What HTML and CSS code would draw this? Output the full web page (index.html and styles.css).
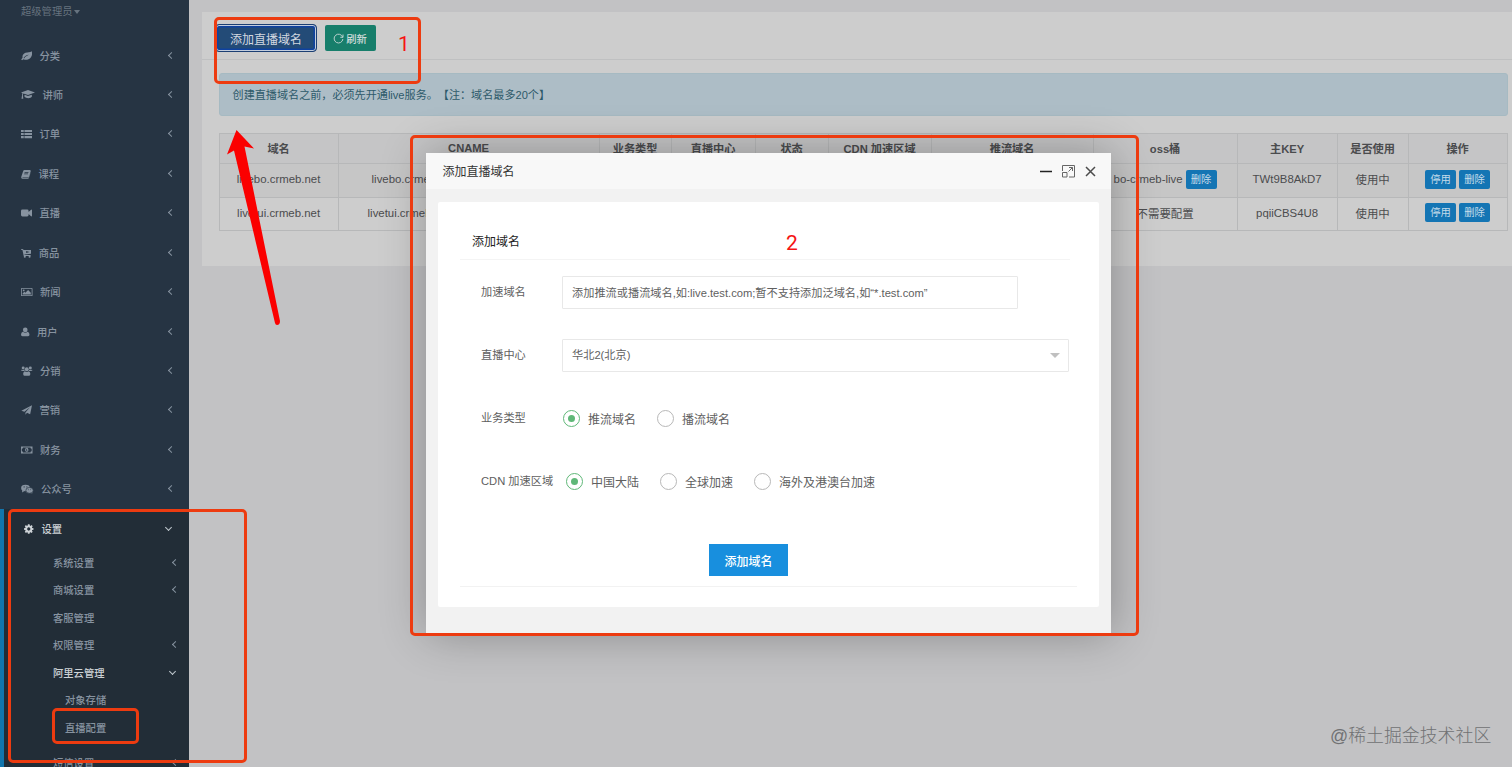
FILE: index.html
```html
<!DOCTYPE html>
<html lang="zh-CN">
<head>
    <meta charset="utf-8">
    <title>直播域名</title>
    <link rel="stylesheet" href="styles.css">
</head>
<body>
    <div class="wrapper">
        <nav class="sidebar">
            <div class="profile">超级管理员<b class="caret"></b></div>
            <ul class="menu">
                <li><a><svg width="11" height="10" viewBox="0 0 16 14"><path d="M15.6 0C13 2.600 10 1 6.500 2.300C3 3.600 1.700 6.500 2.300 9.500L.3 12.200L1.500 13.300L3.600 11.600C9 14 15 10.500 16 5C16.200 3 16 1 15.600 0zM3.700 10C5.500 7 8 5.700 11.500 5.300C8.500 6.500 6.500 7.700 4.500 10.600z"/></svg>分类<i class="arrow"></i></a></li>
                <li><a><svg width="14" height="10" viewBox="0 0 20 14"><path d="M10 0L20 3.500L10 7L3.500 4.900C2.800 5.600 2.700 6.500 2.700 7.500L3.300 12.500H.7L1.500 7.500C1.500 6 1.700 5 2.200 4.400L0 3.500zM5 6.600L10 8.300L15.500 6.500V9.500C14 12.200 7 12.200 5 9.500z"/></svg>讲师<i class="arrow"></i></a></li>
                <li><a><svg width="11" height="10" viewBox="0 0 16 14"><path d="M0 1h4v3H0zM5 1h11v3H5zM0 5.500h4v3H0zM5 5.500h11v3H5zM0 10h4v3H0zM5 10h11v3H5z"/></svg>订单<i class="arrow"></i></a></li>
                <li><a><svg width="10" height="10" viewBox="0 0 15 14"><path d="M5 1H13.500Q15 1.300 14.600 3L12 11Q11.600 12 10.500 12H2.500Q1.700 12 2 12.500H11.500L14.200 5V6L11.800 13Q11.500 14 10.500 14H2Q0 13.700.3 11.500L3.300 2.500Q3.800 1.200 5 1zM5.500 4L5.200 5H11L11.300 4zM4.900 6.200L4.600 7.200H10.300L10.600 6.200z"/></svg>课程<i class="arrow"></i></a></li>
                <li><a><svg width="11" height="10" viewBox="0 0 16 14"><path d="M2 2H9Q11 2 11 4V5.500L15 2Q16 2 16 3V11Q16 12 15 12L11 8.500V10Q11 12 9 12H2Q0 12 0 10V4Q0 2 2 2z"/></svg>直播<i class="arrow"></i></a></li>
                <li><a><svg width="10.300" height="10" viewBox="0 0 15 14"><path fill-rule="evenodd" d="M0 1H3L3.600 2.500H15V8L5 9.200L5.200 10H14V11.300H4L2 2.300H0zM7.500 4V7L12.500 5.500z"/><circle cx="5.500" cy="12.500" r="1.500"/><circle cx="12.500" cy="12.500" r="1.500"/></svg>商品<i class="arrow"></i></a></li>
                <li><a><svg width="11.500" height="10" viewBox="0 0 17 14"><path fill-rule="evenodd" d="M1 1H16Q17 1 17 2V12Q17 13 16 13H1Q0 13 0 12V2Q0 1 1 1zM1.200 2.200V11.800H15.800V2.200zM2.500 10.600V9L5 6.500L6.500 8L10.500 4L14.500 8V10.600z"/><circle cx="4" cy="4.700" r="1.300"/></svg>新闻<i class="arrow"></i></a></li>
                <li><a><svg width="8.500" height="10" viewBox="0 0 12 14"><circle cx="6" cy="4" r="3.300"/><path d="M2.700 6.500Q6 9.500 9.300 6.500Q12 7 12 11Q12 13 10 13H2Q0 13 0 11Q0 7 2.700 6.500z"/></svg>用户<i class="arrow"></i></a></li>
                <li><a><svg width="11.500" height="10" viewBox="0 0 17 14"><circle cx="3.200" cy="2.700" r="2.200"/><circle cx="13.800" cy="2.700" r="2.200"/><circle cx="8.500" cy="4.500" r="2.900"/><path d="M1 5Q3 6 5 5L5.500 7H3Q0 7 0 5.500zM16 5Q14 6 12 5L11.500 7H14Q17 7 17 5.500zM5.500 7.200Q8.500 9.500 11.500 7.200Q13.800 8 13.800 11Q13.800 14 12 14H5Q3.200 14 3.200 11Q3.200 8 5.500 7.200z"/></svg>分销<i class="arrow"></i></a></li>
                <li><a><svg width="11" height="10" viewBox="0 0 16 14"><path d="M16 0L13.300 13L8.700 11L6.500 14V10.500L13 3L5 9.500L.5 8z"/></svg>营销<i class="arrow"></i></a></li>
                <li><a><svg width="11.500" height="10" viewBox="0 0 17 14"><path fill-rule="evenodd" d="M0 2H17V12H0zM3 3.200Q3 5 1.200 5V9Q3 9 3 10.800H14Q14 9 15.800 9V5Q14 5 14 3.200z"/><path fill-rule="evenodd" d="M8.500 3.800A2.500 3.200 0 1 1 8.490 3.800zM8 5L7 5.800L8 6V8H7V8.800H10V8H9V5z"/></svg>财务<i class="arrow"></i></a></li>
                <li><a><svg width="12.500" height="10" viewBox="0 0 18 14"><ellipse cx="6.500" cy="5.500" rx="6.300" ry="4.800"/><path d="M2 8L1.500 12L5 10zM13 11L16 14L16.500 10z"/><ellipse class="edge" cx="12.300" cy="9" rx="5.300" ry="4.200"/><circle class="cut" cx="4.500" cy="4" r=".8"/><circle class="cut" cx="8.500" cy="4" r=".8"/><circle class="cut" cx="10.500" cy="8" r=".7"/><circle class="cut" cx="14" cy="8" r=".7"/></svg>公众号<i class="arrow"></i></a></li>
                <li class="active">
                    <a><svg width="9.500" height="10" viewBox="0 0 14 14"><path fill-rule="evenodd" d="M5.800 0H8.200L8.600 2L9.600 2.400L11.200 1.200L12.800 2.800L11.700 4.400L12.100 5.400L14 5.800V8.200L12.100 8.600L11.700 9.600L12.800 11.200L11.200 12.800L9.600 11.700L8.600 12.100L8.200 14H5.800L5.400 12.100L4.400 11.700L2.800 12.800L1.200 11.200L2.300 9.600L1.900 8.600L0 8.200V5.800L1.900 5.400L2.300 4.400L1.200 2.800L2.800 1.200L4.400 2.400L5.400 2zM7 4.600A2.400 2.400 0 1 0 7.010 4.600z"/></svg>设置<i class="arrow down"></i></a>
                    <ul class="second">
                        <li><a>系统设置<i class="arrow"></i></a></li>
                        <li><a>商城设置<i class="arrow"></i></a></li>
                        <li><a>客服管理</a></li>
                        <li><a>权限管理<i class="arrow"></i></a></li>
                        <li class="open"><a>阿里云管理<i class="arrow down"></i></a>
                            <ul class="third">
                                <li><a>对象存储</a></li>
                                <li><a>直播配置</a></li>
                            </ul>
                        </li>
                        <li><a>短信设置<i class="arrow"></i></a></li>
                    </ul>
                </li>
            </ul>
        </nav>

        <main class="content">
            <section class="ibox">
                <div class="toolbar">
                    <button class="btn-add">添加直播域名</button>
                    <button class="btn-refresh"><svg width="11" height="11" viewBox="0 0 11 11"><path d="M9.700 4.200A4.400 4.400 0 1 0 9.900 6M10 1.500V4.300H7.300"/></svg>刷新</button>
                </div>
                <div class="ibox-content">
                    <div class="alert">创建直播域名之前，必须先开通live服务。【注：域名最多20个】</div>
                    <table>
                        <colgroup>
                            <col class="w-domain"><col class="w-cname"><col class="w-type"><col class="w-center"><col class="w-status"><col class="w-cdn"><col class="w-push"><col class="w-oss"><col class="w-key"><col class="w-used"><col class="w-action">
                        </colgroup>
                        <thead>
                            <tr><th>域名</th><th>CNAME</th><th>业务类型</th><th>直播中心</th><th>状态</th><th>CDN 加速区域</th><th>推流域名</th><th>oss桶</th><th>主KEY</th><th>是否使用</th><th>操作</th></tr>
                        </thead>
                        <tbody>
                            <tr>
                                <td>livebo.crmeb.net</td><td class="cname">livebo.crmeb.net</td><td></td><td></td><td></td><td></td><td></td>
                                <td><div class="cell">bo-crmeb-live <button class="btn-xs">删除</button></div></td><td>TWt9B8AkD7</td><td>使用中</td>
                                <td><div class="cell"><button class="btn-xs">停用</button><button class="btn-xs">删除</button></div></td>
                            </tr>
                            <tr>
                                <td>livetui.crmeb.net</td><td class="cname tui">livetui.crmeb.net</td><td></td><td></td><td></td><td></td><td></td>
                                <td>不需要配置</td><td>pqiiCBS4U8</td><td>使用中</td>
                                <td><div class="cell"><button class="btn-xs">停用</button><button class="btn-xs">删除</button></div></td>
                            </tr>
                        </tbody>
                    </table>
                </div>
            </section>
        </main>
    </div>

    <div class="layer">
        <div class="layer-title">
            <span>添加直播域名</span>
            <svg class="layer-tools" width="60" height="16" viewBox="0 0 60 16">
                <path class="min" d="M1 8.500H13"/>
                <path class="max" d="M23.500 8V2.500H35.500V14H30M29.500 8.500L33.500 4.500M30 4.500H33.500V8M23.500 9.500H28V14H23.500z"/>
                <path class="close" d="M47 4L56 13M56 4L47 13"/>
            </svg>
        </div>
        <div class="card">
            <h2>添加域名</h2>
            <form>
                <div class="form-item">
                    <label>加速域名</label>
                    <div class="input">添加推流或播流域名,如:live.test.com;暂不支持添加泛域名,如“*.test.com”</div>
                </div>
                <div class="form-item">
                    <label>直播中心</label>
                    <div class="select">华北2(北京)<b class="caret"></b></div>
                </div>
                <div class="form-item">
                    <label>业务类型</label>
                    <div class="radios">
                        <span class="radio checked"><i></i>推流域名</span>
                        <span class="radio"><i></i>播流域名</span>
                    </div>
                </div>
                <div class="form-item cdn">
                    <label>CDN 加速区域</label>
                    <div class="radios">
                        <span class="radio checked"><i></i>中国大陆</span>
                        <span class="radio"><i></i>全球加速</span>
                        <span class="radio"><i></i>海外及港澳台加速</span>
                    </div>
                </div>
                <div class="submit"><button type="button">添加域名</button></div>
            </form>
        </div>
    </div>

    <!-- step marks -->
    <div class="mark mark-menu"></div>
    <div class="mark mark-live"></div>
    <div class="mark mark-add"></div>
    <div class="mark mark-layer"></div>
    <span class="step step-1">1</span>
    <span class="step step-2">2</span>
    <svg class="pointer" width="60" height="200" viewBox="0 0 60 200"><path d="M16.500 0L34 18.500L24.500 16.500L60 191Q60 195 57 195Q55.500 195 55 193L14 20.500L7 24.500z"/></svg>
    <div class="watermark">@稀土掘金技术社区</div>
</body>
</html>
```

FILE: styles.css
```css
* {
    box-sizing: border-box;
}

body {
    margin: 0;
    width: 1512px;
    height: 767px;
    overflow: hidden;
    position: relative;
    font-family: "Liberation Sans", "Noto Sans CJK SC", sans-serif;
    font-size: 11.2px;
    color: #4b4c4e;
    background: #c2c2c4;
    text-spacing-trim: space-all;
}

ul {
    list-style: none;
    margin: 0;
    padding: 0;
}

button {
    font-family: inherit;
    border: none;
    padding: 0;
}

.wrapper {
    display: flex;
    height: 767px;
}

/* sidebar */
.sidebar {
    width: 188.6px;
    flex: none;
    background: #263443;
    color: #8793a0;
    font-size: 10.3px;
    font-weight: 500;
    overflow: hidden;
}

.profile {
    height: 35.8px;
    padding: 4px 0 0 21px;
    line-height: 15px;
    color: #66737f;
    font-weight: 400;
}

.caret {
    display: inline-block;
    border: 3.5px solid transparent;
    border-top: 4px solid currentColor;
    border-bottom: 0;
    margin-left: 2px;
    vertical-align: 1px;
}

.menu a {
    display: flex;
    align-items: center;
    height: 39.45px;
    padding: 0 15px 1px 21px;
}

.menu svg {
    margin-right: 7.5px;
    fill: #8793a0;
    position: relative;
    top: .5px;
}

.menu .cut {
    fill: #263443;
}

.menu .edge {
    stroke: #263443;
    stroke-width: 1;
}

.arrow {
    width: 5px;
    height: 5px;
    margin-left: auto;
    border-left: 1px solid #8793a0;
    border-bottom: 1px solid #8793a0;
    transform: rotate(45deg);
}

.arrow.down {
    border-color: #c0c8cf;
    transform: translateY(-1px) rotate(-45deg);
}

.menu .active {
    background: #222d37;
    border-left: 4px solid #1276ae;
}

.menu .active > a {
    color: #cdd2d6;
    padding: 0 18px 0 20px;
}

.active > a svg {
    fill: #cdd2d6;
    margin-right: 8px;
}

.menu .second a {
    height: 27.5px;
    padding: 0 11px 0 49px;
}

.menu .second .open > a {
    color: #cdd2d6;
    padding-right: 14px;
}

.menu .third a {
    padding-left: 61px;
}

.third {
    padding-bottom: 8px;
}

/* page */
.content {
    flex: 1;
    padding: 12px 0 0 13.4px;
}

.ibox {
    height: 254px;
    background: #cdcdcd;
}

.toolbar {
    display: flex;
    gap: 8px;
    align-items: center;
    height: 48px;
    padding: 5px 0 0 13px;
    border-bottom: 1px solid #bfc0c1;
}

.btn-add {
    width: 102px;
    height: 28px;
    color: #d3d9e0;
    background: #234b77;
    border: 1px solid #1c3f73;
    border-radius: 4px;
    box-shadow: inset 0 0 0 1px #c2cddd, inset 0 0 0 2.5px #0f42a0;
    font-size: 12px;
}

.btn-refresh {
    display: flex;
    align-items: center;
    justify-content: center;
    gap: 2px;
    width: 51px;
    height: 26px;
    padding-right: 1px;
    background: #177e6b;
    color: #cfdcda;
    border-radius: 2px;
    font-size: 10.3px;
    font-weight: 500;
}

.btn-refresh svg {
    fill: none;
    stroke: #b8d0cc;
    stroke-width: 1;
}

.ibox-content {
    padding: 13px 5px 0 16.6px;
}

.alert {
    height: 43px;
    padding-left: 13px;
    line-height: 43px;
    font-size: 11.1px;
    color: #2d5a6a;
    background: #adbdc6;
    border: 1px solid #a6bac2;
    border-radius: 3px;
    margin-bottom: 17px;
}

table {
    width: 1288px;
    table-layout: fixed;
    border-collapse: collapse;
    text-align: center;
}

th, td {
    border: 1px solid #b7b8b9;
    padding: 0 0 2px;
    white-space: nowrap;
}

th {
    height: 30px;
    background: #c5c5c6;
    font-weight: 700;
}

td {
    height: 33.5px;
    overflow: hidden;
    font-size: 11.4px;
}

tbody tr:first-child {
    background: #c6c6c6;
}

td.cname {
    text-align: left;
    padding-left: 33px;
}

td.cname.tui {
    padding-left: 29px;
}

.w-domain { width: 119px; }
.w-cname { width: 261px; }
.w-type { width: 72px; }
.w-center { width: 84px; }
.w-status { width: 73px; }
.w-cdn { width: 103px; }
.w-push { width: 162px; }
.w-oss { width: 144px; }
.w-key { width: 100px; }
.w-used { width: 71px; }
.w-action { width: 99px; }

.cell {
    display: flex;
    align-items: center;
    justify-content: center;
    gap: 3px;
}

.btn-xs {
    width: 31px;
    height: 19px;
    line-height: 19px;
    border-radius: 2px;
    background: #1475b4;
    color: #c6dcea;
    font-size: 10.3px;
}

/* popup */
.layer {
    position: absolute;
    left: 426px;
    top: 153px;
    width: 685px;
    height: 480px;
    background: #f2f2f2;
    box-shadow: 1px 1px 43px rgba(0, 0, 0, 0.3);
}

.layer-title {
    display: flex;
    align-items: center;
    justify-content: space-between;
    height: 36px;
    padding: 0 12px 1px 16.5px;
    background: #f8f8f8;
    color: #333;
    font-size: 12px;
}

.layer-tools {
    fill: none;
    stroke: #4c4c4c;
    margin-top: 1px;
}

.layer-tools .min {
    stroke: #222;
    stroke-width: 1.5;
}

.layer-tools .max {
    stroke: #666;
}

.layer-tools .close {
    stroke-width: 1.5;
}

.card {
    width: 661px;
    height: 405px;
    margin: 13px 12px 0;
    padding: 21px 22px;
    background: #fff;
    border-radius: 2px;
}

.card h2 {
    margin: 0 7px 0 0;
    height: 37px;
    padding-left: 12px;
    line-height: 38px;
    font-size: 12px;
    font-weight: 400;
    color: #222;
    border-bottom: 1px solid #f4f4f4;
}

form {
    padding-top: 16px;
    border-bottom: 1px solid #f2f2f2;
    height: 327px;
}

.form-item {
    display: flex;
    height: 33px;
    margin-bottom: 30px;
    padding-left: 21px;
    align-items: center;
    color: #606060;
}

.form-item label {
    width: 81px;
    padding-bottom: 3px;
    white-space: nowrap;
}

.input, .select {
    width: 456px;
    height: 33px;
    line-height: 33px;
    padding-left: 9px;
    border: 1px solid #e8e8e8;
    border-radius: 1px;
    white-space: nowrap;
}

.select {
    display: flex;
    align-items: center;
    justify-content: space-between;
    width: 507px;
    padding-right: 8px;
}

.select .caret {
    border-width: 5px;
    border-bottom: 0;
    border-top-color: #c0c0c0;
}

.radios {
    display: flex;
    gap: 21px;
    padding: 0 0 1px 1px;
    font-size: 12px;
}

.cdn .radios {
    padding-left: 4px;
}

.radio {
    display: flex;
    align-items: center;
    gap: 8px;
}

.radio i {
    display: flex;
    align-items: center;
    justify-content: center;
    width: 17px;
    height: 17px;
    margin-top: 1px;
    border: 1px solid #b8b8b8;
    border-radius: 50%;
}

.radio.checked i {
    border-color: #5fb878;
}

.radio.checked i::after {
    content: "";
    width: 7px;
    height: 7px;
    border-radius: 50%;
    background: #5fb878;
}

.submit {
    padding: 16px 0 0 249px;
}

.submit button {
    width: 79px;
    height: 32px;
    color: #fff;
    background: #188fde;
    font-size: 12px;
    font-weight: 500;
}

/* marks drawn over the page */
.mark {
    position: absolute;
    border: 3px solid #ed3b10;
    border-radius: 5px;
}

.mark-menu {
    left: 8px;
    top: 509px;
    width: 239px;
    height: 254px;
}

.mark-live {
    left: 52px;
    top: 708px;
    width: 87px;
    height: 36px;
}

.mark-add {
    left: 214px;
    top: 17px;
    width: 207px;
    height: 67px;
}

.mark-layer {
    left: 410px;
    top: 135px;
    width: 729px;
    height: 501px;
}

.step {
    position: absolute;
    font-family: Roboto, sans-serif;
    font-size: 21px;
    line-height: 24px;
    color: #f51414;
}

.step-1 {
    left: 398px;
    top: 32px;
}

.step-2 {
    left: 786px;
    top: 231px;
}

.pointer {
    position: absolute;
    left: 220px;
    top: 130px;
    fill: #fb0000;
}

.watermark {
    position: absolute;
    left: 1330px;
    top: 723px;
    font-size: 17.9px;
    line-height: 26px;
    white-space: nowrap;
    color: #707173;
    font-weight: 300;
}
```
